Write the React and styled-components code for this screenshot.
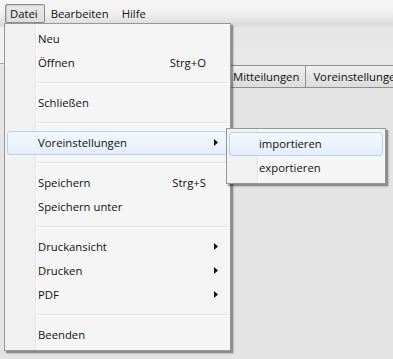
import React from "react";
import styled, { createGlobalStyle, css } from "styled-components";

const GlobalStyle = createGlobalStyle`
  html, body { margin: 0; padding: 0; }
  body {
    background: #e4e4e4;
    font-family: "Open Sans", "Noto Sans", sans-serif;
    font-size: 11.3px;
    color: #111;
  }
`;

const Window = styled.div`
  position: relative;
  width: 393px;
  height: 359px;
  overflow: hidden;
  background: #e4e4e4;
  display: flex;
  flex-direction: column;
`;

const MenuBar = styled.div`
  height: 25px;
  box-sizing: border-box;
  padding: 4px 5px 0;
  display: flex;
  align-items: flex-start;
  gap: 1px;
  background: linear-gradient(#f6f6f6 0%, #f0f0f0 55%, #e2e2e2 85%, #d9d9d9 100%);
`;

const BarItem = styled.div`
  height: 19px;
  box-sizing: border-box;
  padding: 0 6px 1px 4px;
  border: 1px solid transparent;
  border-radius: 2px;
  display: flex;
  align-items: center;
  color: #111;
  ${(p) =>
    p.$active &&
    css`
      border-color: #8b8c8c;
      background: linear-gradient(#e8e8e8, #dedede);
      box-shadow: inset 1px 1px 1px rgba(0, 0, 0, 0.12);
    `}
`;

const Toolbar = styled.div`
  height: 40px;
  display: flex;
  background: linear-gradient(#dcdcdc 0px, #e6e6e6 3px, #e9e9e9 100%);
`;

const ToolPanel = styled.div`
  width: 120px;
  margin-top: 2px;
  margin-bottom: 1px;
  background: #f1f1f1;
  border-bottom: 1px solid #a6a6a6;
`;

const TabStrip = styled.div`
  height: 23px;
  display: flex;
  padding-left: 225px;
`;

const Tab = styled.div`
  box-sizing: border-box;
  height: 23px;
  padding: 0 6px 1px 7px;
  display: flex;
  align-items: center;
  border: 1px solid #8e8e8e;
  border-left: ${(p) => (p.$first ? "1px solid #8e8e8e" : "none")};
  background: linear-gradient(#f2f2f2, #e4e4e4 50%, #dcdcdc);
  white-space: nowrap;
  color: #111;
`;

const Content = styled.div`
  flex: 1;
  background: #e4e4e4;
`;

const MenuPanel = styled.div`
  position: absolute;
  left: ${(p) => p.$left}px;
  top: ${(p) => p.$top}px;
  width: ${(p) => p.$width}px;
  box-sizing: border-box;
  padding: 3px 2px;
  border: 1px solid #979797;
  background: linear-gradient(
    to right,
    #f1f1f1 0px,
    #f1f1f1 30px,
    #e2e3e3 30px,
    #e2e3e3 31px,
    #ffffff 31px,
    #ffffff 32px,
    #f5f5f5 32px
  );
  box-shadow: 2px 2px 1px rgba(0, 0, 0, 0.32), 3px 3px 2px rgba(0, 0, 0, 0.1);
  display: flex;
  flex-direction: column;
`;

const Item = styled.div`
  height: 24px;
  box-sizing: border-box;
  display: grid;
  grid-template-columns: 1fr auto 21px;
  align-items: center;
  padding-left: ${(p) => p.$indent}px;
  padding-bottom: 2px;
  border: 1px solid transparent;
  border-radius: 3px;
  color: #111;
  white-space: nowrap;
  ${(p) =>
    p.$hover &&
    css`
      border-color: #b4d2f2;
      background: linear-gradient(#f3f8fd, #e4eefa);
    `}
`;

const Shortcut = styled.span`
  color: #111;
`;

const ArrowBox = styled.span`
  display: flex;
  align-items: center;
  padding-left: 8px;
  padding-top: 1px;
`;

const Separator = styled.div`
  height: 16px;
  display: flex;
  align-items: center;
  padding-left: 30px;
  padding-right: 1px;
  &::after {
    content: "";
    flex: 1;
    height: 1px;
    background: #e0e0e0;
    border-bottom: 1px solid #ffffff;
  }
`;

const Arrow = () => (
  <svg width="4" height="7" viewBox="0 0 4 7">
    <polygon points="0,0 4,3.5 0,7" fill="#111" />
  </svg>
);

const mainItems = [
  { label: "Neu" },
  { label: "Öffnen", shortcut: "Strg+O" },
  { sep: true },
  { label: "Schließen" },
  { sep: true },
  { label: "Voreinstellungen", sub: true, hover: true },
  { sep: true },
  { label: "Speichern", shortcut: "Strg+S" },
  { label: "Speichern unter" },
  { sep: true },
  { label: "Druckansicht", sub: true },
  { label: "Drucken", sub: true },
  { label: "PDF", sub: true },
  { sep: true },
  { label: "Beenden" },
];

const subItems = [
  { label: "importieren", hover: true },
  { label: "exportieren" },
];

function Menu({ items, left, top, width, indent }) {
  return (
    <MenuPanel $left={left} $top={top} $width={width}>
      {items.map((it, i) =>
        it.sep ? (
          <Separator key={i} />
        ) : (
          <Item key={i} $hover={it.hover} $indent={indent}>
            <span>{it.label}</span>
            <Shortcut>{it.shortcut || ""}</Shortcut>
            <ArrowBox>{it.sub ? <Arrow /> : null}</ArrowBox>
          </Item>
        )
      )}
    </MenuPanel>
  );
}

export default function App() {
  return (
    <>
      <GlobalStyle />
      <Window>
        <MenuBar>
          <BarItem $active>Datei</BarItem>
          <BarItem>Bearbeiten</BarItem>
          <BarItem>Hilfe</BarItem>
        </MenuBar>
        <Toolbar>
          <ToolPanel />
        </Toolbar>
        <TabStrip>
          <Tab $first>Mitteilungen</Tab>
          <Tab>Voreinstellungen</Tab>
        </TabStrip>
        <Content />
        <Menu items={mainItems} left={4} top={23} width={227} indent={30} />
        <Menu items={subItems} left={226} top={128} width={160} indent={29} />
      </Window>
    </>
  );
}
